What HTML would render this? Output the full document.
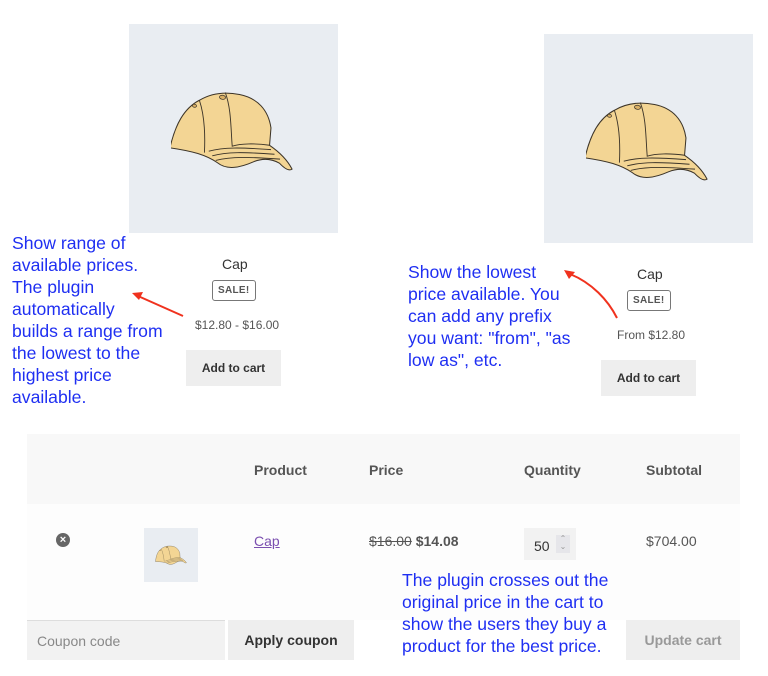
<!DOCTYPE html>
<html><head><meta charset="utf-8"><style>
body{margin:0;width:768px;height:676px;background:#fff;position:relative;overflow:hidden;font-family:"Liberation Sans",sans-serif}
.a{position:absolute}
.img{background:#e9edf2}
.note{color:#1f2ff2;font-size:17.6px;line-height:22px}
.ui{color:#333;font-family:"Liberation Sans",sans-serif}
.sale{border:1px solid #777;border-radius:3px;font-size:10px;font-weight:bold;color:#555;padding:4px 5px;letter-spacing:.3px}
.btn{background:#eee;font-size:12px;font-weight:bold;color:#333;text-align:center}
.hd{font-size:14px;font-weight:bold;color:#555}
</style></head><body>
<svg width="0" height="0" style="position:absolute"><defs>
<g id="cap">
<path d="M2 68 C4 45 10 28 24 18 C34 10 46 6 62 7 C80 8 92 18 97 35 L98 52 C106 56 116 62 123 72 C120 75 115 72 110 68 C100 64 92 66 85 70 C72 78 60 82 50 76 C38 70 24 68 2 68 Z" fill="#f3d594" stroke="#3c3428" stroke-width="1"/>
<path d="M24 18 C30 30 34 46 36 68 M48 7 C56 22 58 40 62 58 C70 54 84 52 98 52 M40 66 C54 60 70 58 100 56 M44 70 C58 64 74 62 104 60 M48 74 C62 68 80 66 110 64" fill="none" stroke="#3c3428" stroke-width=".9"/>
<ellipse cx="46" cy="12" rx="3" ry="2" fill="#d9b066" stroke="#3c3428" stroke-width=".7"/>
<ellipse cx="20" cy="24" rx="2" ry="1.5" fill="#d9b066" stroke="#3c3428" stroke-width=".7"/>
</g></defs></svg>

<div class="a img" style="left:129px;top:24px;width:209px;height:209px"><svg class="a" style="left:42px;top:63px" width="128" height="86" viewBox="0 0 125 84"><g transform="rotate(8 62 42)"><use href="#cap"/></g></svg></div>
<div class="a img" style="left:544px;top:34px;width:209px;height:209px"><svg class="a" style="left:42px;top:63px" width="128" height="86" viewBox="0 0 125 84"><g transform="rotate(8 62 42)"><use href="#cap"/></g></svg></div>

<div class="a ui" style="left:222px;top:256px;font-size:14px">Cap</div>
<div class="a ui sale" style="left:212px;top:280px">SALE!</div>
<div class="a ui" style="left:195px;top:318px;font-size:12px;color:#555">$12.80 - $16.00</div>
<div class="a ui btn" style="left:186px;top:350px;width:95px;height:36px;line-height:36px">Add to cart</div>

<div class="a ui" style="left:637px;top:266px;font-size:14px">Cap</div>
<div class="a ui sale" style="left:627px;top:290px">SALE!</div>
<div class="a ui" style="left:617px;top:328px;font-size:12px;color:#555">From $12.80</div>
<div class="a ui btn" style="left:601px;top:360px;width:95px;height:36px;line-height:36px">Add to cart</div>

<div class="a note" style="left:12px;top:232px">Show range of<br>available prices.<br>The plugin<br>automatically<br>builds a range from<br>the lowest to the<br>highest price<br>available.</div>
<div class="a note" style="left:408px;top:261px">Show the lowest<br>price available. You<br>can add any prefix<br>you want: "from", "as<br>low as", etc.</div>

<svg class="a" style="left:0;top:0" width="768" height="676">
<g stroke="#f0321e" stroke-width="2" fill="none">
<path d="M183 316 L138 296"/>
<path d="M617 318 C608 300 592 283 570 274"/>
<path d="M403 524 C440 510 480 505 488 552"/>
</g>
<g fill="#f0321e">
<path d="M132 293 L143 292 L139 300 Z"/>
<path d="M564 270 L575 272 L569 279 Z"/>
<path d="M483 552 L494 552 L489 561 Z"/>
</g>
</svg>

<div class="a" style="left:27px;top:434px;width:713px;height:70px;background:#f8f8f8"></div>
<div class="a" style="left:27px;top:504px;width:713px;height:116px;background:#fdfdfd"></div>
<div class="a ui hd" style="left:254px;top:462px">Product</div>
<div class="a ui hd" style="left:369px;top:462px">Price</div>
<div class="a ui hd" style="left:524px;top:462px">Quantity</div>
<div class="a ui hd" style="left:646px;top:462px">Subtotal</div>

<div class="a" style="left:56px;top:533px;width:14px;height:14px;border-radius:50%;background:#666;color:#fff;font-size:11px;line-height:14px;text-align:center;font-weight:bold">×</div>
<div class="a img" style="left:144px;top:528px;width:54px;height:54px"><svg class="a" style="left:11px;top:16px" width="32" height="22" viewBox="0 0 125 84"><use href="#cap"/></svg></div>
<div class="a ui" style="left:254px;top:533px;font-size:14px;color:#7b4fb0;text-decoration:underline">Cap</div>
<div class="a ui" style="left:369px;top:533px;font-size:14px;color:#555"><s>$16.00</s> <b>$14.08</b></div>
<div class="a" style="left:524px;top:528px;width:52px;height:32px;background:#f2f2f2"></div>
<div class="a ui" style="left:534px;top:538px;font-size:14px">50</div>
<div class="a" style="left:556px;top:535px;width:14px;height:18px;background:#e6e6ea;color:#999;font-size:8px;line-height:8px;text-align:center">⌃<br>⌄</div>
<div class="a ui" style="left:646px;top:533px;font-size:14px;color:#555">$704.00</div>

<div class="a" style="left:27px;top:620px;width:198px;height:40px;background:#f2f2f2;border-top:1px solid #ddd;box-sizing:border-box"></div>
<div class="a ui" style="left:37px;top:633px;font-size:14px;color:#888">Coupon code</div>
<div class="a ui btn" style="left:228px;top:620px;width:126px;height:40px;line-height:40px;font-size:14px">Apply coupon</div>
<div class="a ui btn" style="left:626px;top:620px;width:114px;height:40px;line-height:40px;font-size:14px;color:#999">Update cart</div>

<div class="a note" style="left:402px;top:569px">The plugin crosses out the<br>original price in the cart to<br>show the users they buy a<br>product for the best price.</div>
</body></html>
